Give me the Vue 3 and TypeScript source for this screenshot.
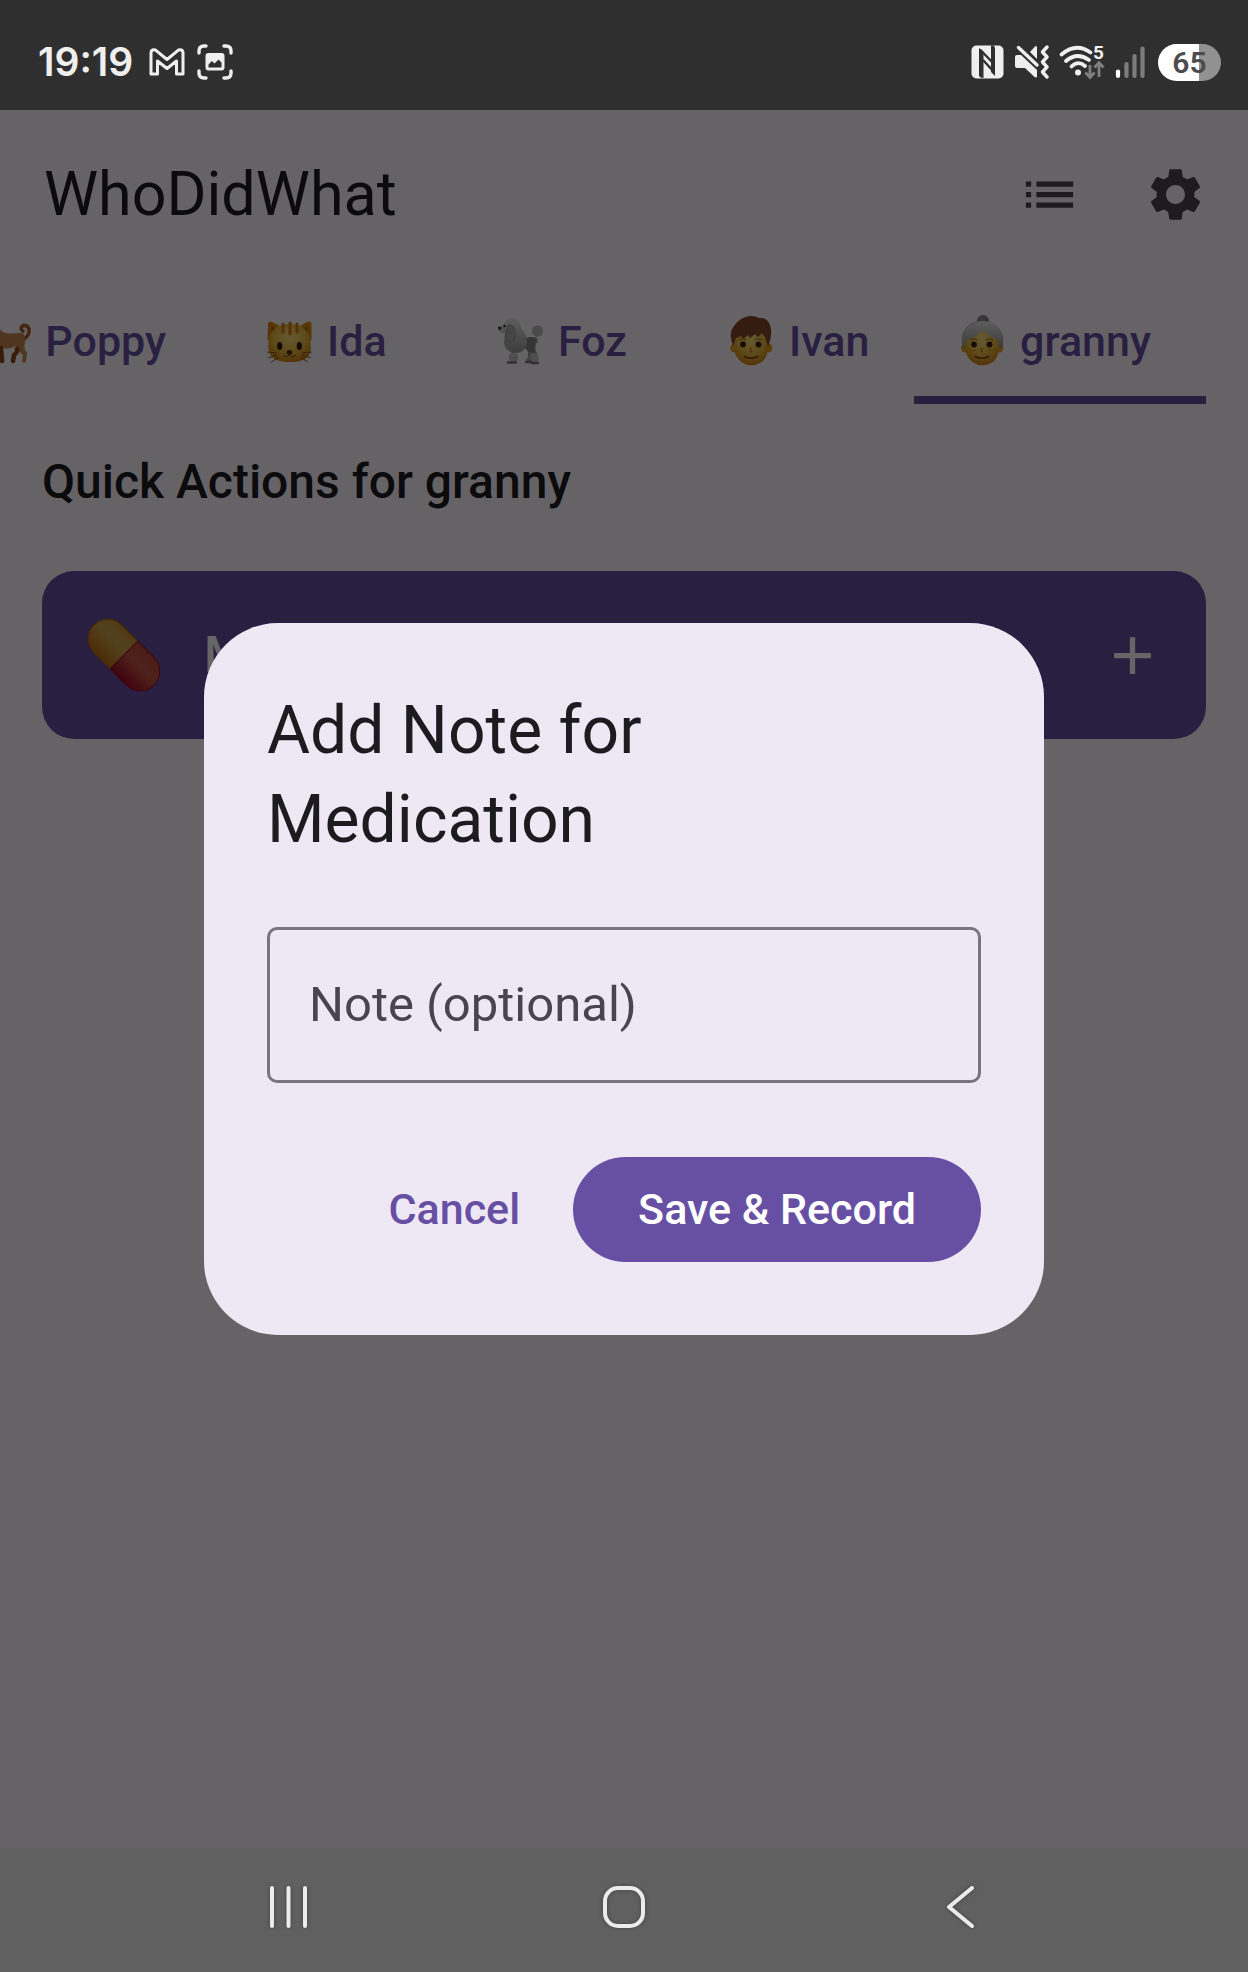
<script setup lang="ts">
import { ref } from 'vue'

interface Member {
  id: string
  name: string
}

const members: Member[] = [
  { id: 'dog', name: 'Poppy' },
  { id: 'cat', name: 'Ida' },
  { id: 'poodle', name: 'Foz' },
  { id: 'boy', name: 'Ivan' },
  { id: 'granny', name: 'granny' },
]

const selected = ref('granny')
const note = ref('')
const dialogOpen = ref(true)
</script>

<template>
  <div class="phone">
    <header class="status">
      <div class="status-side">
        <span class="clock">19:19</span>
        <svg class="mail" width="36" height="28" viewBox="0 0 36 28" aria-hidden="true">
          <path d="M2 5Q2 1.800 5 1.800Q6.500 1.800 7.500 2.800L18 11.500L28.500 2.800Q29.500 1.800 31 1.800Q34 1.800 34 5V26H27.500V13L18 20.500L8.500 13V26H2Z" fill="none" stroke="#efefef" stroke-width="3" stroke-linejoin="round" />
        </svg>
        <svg width="36" height="36" viewBox="0 0 36 36" aria-hidden="true">
          <path d="M2 9V7Q2 2 7 2H9M27 2H29Q34 2 34 7V9M34 27V29Q34 34 29 34H27M9 34H7Q2 34 2 29V27" fill="none" stroke="#efefef" stroke-width="3.400" stroke-linecap="round" />
          <path fill-rule="evenodd" fill="#efefef" d="M11.500 9H24.500Q27.500 9 27.500 12V23.500Q27.500 26.500 24.500 26.500H11.500Q8.500 26.500 8.500 23.500V12Q8.500 9 11.500 9ZM11.500 23.500H24.500V18.500L21.500 15.500L17.500 19.500L15 17L11.500 20.500Z" />
        </svg>
      </div>
      <div class="status-side right">
        <svg width="33" height="34" viewBox="0 0 33 34" aria-hidden="true">
          <rect x="0.500" y="0.500" width="32" height="33" rx="5" fill="#efefef" />
          <path d="M8 3L12.500 7V33Q9 33 8 31Z" fill="#2f2f2f" />
          <path d="M20 0.500H23Q24 2 24 4V31L20 27Z" fill="#2f2f2f" />
          <path d="M9 4.500L23 19M12 15L23 27" stroke="#2f2f2f" stroke-width="2.400" />
        </svg>
        <svg width="35" height="34" viewBox="0 0 35 34" aria-hidden="true">
          <path d="M3 10H7L23 25V32Q22 33 20 31.500L11 23H3Q1 23 1 21V12Q1 10 3 10Z" fill="#efefef" />
          <path d="M16 7L21 1.500Q23 0 23 2.500V14Z" fill="#efefef" />
          <path d="M4.500 2.500L23 20" stroke="#efefef" stroke-width="3.400" stroke-linecap="round" />
          <path d="M33 2L28.500 7L33 12L28.500 17L33 22L28.500 27L33 32" fill="none" stroke="#efefef" stroke-width="3.400" stroke-linecap="round" stroke-linejoin="round" />
        </svg>
        <svg class="wifi" width="46" height="34" viewBox="0 0 46 34" aria-hidden="true">
          <path d="M2.500 9.500Q17 -3 31.500 7.500M7 16Q18 6.500 30 15M12.500 21.500Q19 15 26 21" fill="none" stroke="#efefef" stroke-width="3.800" stroke-linecap="round" />
          <circle cx="19" cy="27.500" r="3" fill="#efefef" />
          <path d="M31 20V32M26.500 27.500L31 32.500L35.500 27.500M40 32V18M35.500 22.500L40 17.500L44.500 22.500" fill="none" stroke="#808080" stroke-width="2.800" />
          <text x="34" y="14" class="wifi-generation">5</text>
        </svg>
        <svg width="30" height="34" viewBox="0 0 30 34" aria-hidden="true">
          <g stroke-width="4.200" stroke-linecap="round">
            <path d="M3 26.500V31" stroke="#ffffff" />
            <path d="M11.500 19V31M19.500 11V31M27.500 3.500V31" stroke="#7c7c7c" />
          </g>
        </svg>
        <span class="battery">65</span>
      </div>
    </header>

    <main class="app">
      <div class="appbar">
        <h1>WhoDidWhat</h1>
        <button class="icon-button" type="button" aria-label="History">
          <svg width="63" height="63" viewBox="0 0 24 24"><path d="M3 13h2v-2H3v2zm0 4h2v-2H3v2zm0-8h2V7H3v2zm4 4h14v-2H7v2zm0 4h14v-2H7v2zM7 7v2h14V7H7z" fill="#49454f" /></svg>
        </button>
        <button class="icon-button" type="button" aria-label="Settings">
          <svg width="63" height="63" viewBox="0 0 24 24"><path fill="#49454f" d="M19.140 12.940c.04-.3.06-.61.06-.94 0-.32-.02-.64-.07-.94l2.030-1.580c.18-.14.23-.41.12-.61l-1.920-3.320c-.12-.22-.37-.29-.59-.22l-2.390.96c-.5-.38-1.030-.7-1.620-.94l-.36-2.540c-.04-.24-.24-.41-.48-.41h-3.840c-.24 0-.43.17-.47.41l-.36 2.540c-.59.24-1.130.57-1.620.94l-2.390-.96c-.22-.08-.47 0-.59.22L2.740 8.870c-.12.21-.08.47.12.61l2.030 1.580c-.05.3-.09.63-.09.94s.02.64.07.94l-2.030 1.580c-.18.14-.23.41-.12.61l1.920 3.320c.12.22.37.29.59.22l2.390-.96c.5.38 1.030.7 1.620.94l.36 2.540c.05.24.24.41.48.41h3.840c.24 0 .44-.17.47-.41l.36-2.540c.59-.24 1.130-.56 1.620-.94l2.390.96c.22.08.47 0 .59-.22l1.920-3.320c.12-.22.07-.47-.12-.61l-2.010-1.580zM12 15.600c-1.980 0-3.600-1.620-3.600-3.600s1.620-3.600 3.600-3.600 3.600 1.620 3.600 3.600-1.620 3.600-3.600 3.600z" /></svg>
        </button>
      </div>

      <div class="tabs" role="tablist">
        <button
          v-for="m in members"
          :key="m.id"
          type="button"
          role="tab"
          class="tab"
          :class="{ active: m.id === selected, long: m.name.length > 4 }"
          :aria-selected="m.id === selected"
          @click="selected = m.id"
        >
          <svg width="52" height="52" viewBox="0 0 52 52" aria-hidden="true">
            <defs>
              <radialGradient :id="'skin-' + m.id" cx="50%" cy="35%" r="65%">
                <stop offset="0" stop-color="#ffdf80" />
                <stop offset="0.600" stop-color="#e8b83c" />
                <stop offset="1" stop-color="#cf8310" />
              </radialGradient>
              <linearGradient :id="'fur-' + m.id" x1="0" y1="0" x2="0" y2="1">
                <stop offset="0" stop-color="#e8e8e8" />
                <stop offset="1" stop-color="#9a9a9a" />
              </linearGradient>
            </defs>
            <template v-if="m.id === 'dog'">
              <path d="M43 24Q49 20 48 14Q46 9 41.500 11Q38.500 14 42 16" fill="none" stroke="#a85f22" stroke-width="3.600" stroke-linecap="round" />
              <path d="M4 8Q12 4 17 10Q19 18 28 18.500L41 18Q45 20 44 28Q42 33 46 38L45 46Q44 48.500 41 47L42 40Q36 35 35 31Q25 36 20 32L8 30Q1 18 4 8Z" fill="#c98552" />
              <path d="M20 33L21 46M36 34Q37 37 33 40L32 46" fill="none" stroke="#8d4a1a" stroke-width="4.600" stroke-linecap="round" />
            </template>
            <template v-else-if="m.id === 'cat'">
              <path d="M5 8Q6 5.500 9 7L19 12H35L44 7Q47 5.500 48.500 8V25L27 40L4.500 25Z" fill="#dc8b12" />
              <path d="M8.500 11L15 15L9 22ZM45 11L38 15L44 22Z" fill="#b85c17" />
              <path d="M27 9Q40 9 45 18Q50 30 46.500 39Q43 47 27 47Q11 47 7 39Q3 30 8 18Q13 9 27 9Z" :fill="'url(#skin-' + m.id + ')'" />
              <path d="M20 9V17M27 8V19M34 9V17" stroke="#d9780f" stroke-width="3" stroke-linecap="round" />
              <ellipse cx="16.700" cy="31" rx="2.600" ry="4" fill="#2b1a10" />
              <ellipse cx="36.300" cy="31" rx="2.600" ry="4" fill="#2b1a10" />
              <ellipse cx="26.500" cy="37.500" rx="2.800" ry="2.400" fill="#5a2d12" />
              <path d="M20 40Q24 43.500 26.500 39.500Q29 43.500 33 40M14 38L4 37M14 40L5 43M15 42L8 47.500M39 38L49 37M39 40L48 43M38 42L45 47.500" fill="none" stroke="#7a4a18" stroke-width="0.900" />
            </template>
            <template v-else-if="m.id === 'poodle'">
              <path d="M41 22L43 28M39 34L42 40" stroke="#a0a0a0" stroke-width="3" />
              <circle cx="43.500" cy="16" r="5.600" fill="#b8b8b8" />
              <path d="M31 23Q41 20 42 25L41 38L36 39L31 33Z" fill="#858585" />
              <path d="M4 14Q3 11 7 11Q11 10 11 7Q15 0 22 4Q26 7 27 13Q34 21 33 29Q30 38 22 38Q11 37 10 28Q10 22 11 18Q6 19 4 14Z" :fill="'url(#fur-' + m.id + ')'" />
              <path d="M14 10Q21 9 21 18Q22 27 16 27Q11 25 12 18Z" fill="#b0b0b0" stroke="#888888" stroke-width="0.800" />
              <path d="M4 12Q6 11 8 13L6 15Q4 15 4 12Z" fill="#333333" />
              <circle cx="10.500" cy="11" r="1.200" fill="#222222" />
              <path d="M19 36L19 45M36 37L35 46" stroke="#a0a0a0" stroke-width="3.400" />
              <circle cx="19.500" cy="42.500" r="4.800" fill="#c4c4c4" />
              <circle cx="40" cy="43" r="4.800" fill="#c4c4c4" />
              <circle cx="35" cy="45" r="2.600" fill="#a5a5a5" />
              <path d="M14 47.500H22M32 47H37M38 48H44" stroke="#777777" stroke-width="2.400" stroke-linecap="round" />
            </template>
            <template v-else>
              <ellipse cx="9" cy="33" rx="3.800" ry="4.600" fill="#e8a01c" />
              <ellipse cx="43.500" cy="33" rx="3.800" ry="4.600" fill="#e8a01c" />
              <circle v-if="m.id === 'granny'" cx="27" cy="6" r="6" fill="#858585" />
              <path v-if="m.id === 'granny'" d="M7 33Q3 19 12 11Q26 0 40 11Q50 19 46 33Z" fill="#8d8d8d" />
              <path d="M26 10Q43 10 43.500 29Q43 43 36 47.500Q26 53 17 47.500Q9 42 8.500 29Q9 10 26 10Z" :fill="'url(#skin-' + m.id + ')'" />
              <path v-if="m.id === 'granny'" d="M27 15Q20 22 12 25L7 32Q3 18 14 10Q27 2 40 10Q50 18 45 32L42 25Q33 22 27 15Z" :fill="'url(#fur-' + m.id + ')'" />
              <path v-else d="M8 31Q3 18 9 11Q15 2 25 1Q31 1 34 3Q42 2 45 10Q48 19 43 32L40 22L37 18L33 22L30 19L25 23L23 20L18 24L16 21L11 23Z" fill="#83482c" />
              <circle cx="18" cy="29.500" r="2.900" fill="#3a2010" />
              <circle cx="33.500" cy="29.500" r="2.900" fill="#3a2010" />
              <path d="M14 25Q18 23 21 25M30 25Q34 23 37 25M26 33Q24.500 36.500 27 37" fill="none" stroke="#ad6b12" stroke-width="1.200" />
              <path d="M19.500 41.500Q26 45 32.500 41.500" fill="none" stroke="#7a3f16" stroke-width="1.700" stroke-linecap="round" />
              <path v-if="m.id === 'granny'" d="M13 34Q16 37 20 35M32 35Q36 37 39 34" fill="none" stroke="#d2921d" stroke-width="1" />
            </template>
          </svg>
          <span>{{ m.name }}</span>
        </button>
      </div>

      <section class="actions">
        <h2>Quick Actions for {{ selected }}</h2>
        <button class="action" type="button" @click="dialogOpen = true">
          <svg width="80" height="80" viewBox="0 0 80 80" aria-hidden="true">
            <defs>
              <linearGradient id="pill-top" x1="0" y1="0" x2="0" y2="1">
                <stop offset="0" stop-color="#c99030" />
                <stop offset="0.400" stop-color="#cfa650" />
                <stop offset="1" stop-color="#c06c10" />
              </linearGradient>
              <linearGradient id="pill-bottom" x1="0" y1="0" x2="0" y2="1">
                <stop offset="0" stop-color="#b84c38" />
                <stop offset="0.450" stop-color="#c45448" />
                <stop offset="1" stop-color="#a00a26" />
              </linearGradient>
            </defs>
            <g transform="rotate(45 40 40)">
              <path d="M40 20.500H17A19.500 19.500 0 0 0 17 59.500H40Z" fill="url(#pill-top)" stroke="#a8640c" stroke-width="1" />
              <path d="M40 20.500H63A19.500 19.500 0 0 1 63 59.500H40Z" fill="url(#pill-bottom)" stroke="#9c0c20" stroke-width="1" />
            </g>
          </svg>
          <span class="action-name">Medication</span>
          <svg width="63" height="63" viewBox="0 0 24 24" aria-hidden="true"><path d="M19 13h-6v6h-2v-6H5v-2h6V5h2v6h6v2z" fill="#ffffff" /></svg>
        </button>
      </section>

      <div v-if="dialogOpen" class="scrim">
        <form class="dialog" role="dialog" aria-modal="true" aria-labelledby="dialog-title" @submit.prevent="dialogOpen = false">
          <h2 id="dialog-title">Add Note for<br />Medication</h2>
          <input v-model="note" type="text" placeholder="Note (optional)" aria-label="Note (optional)" />
          <div class="dialog-buttons">
            <button class="cancel" type="button" @click="dialogOpen = false">Cancel</button>
            <button class="save" type="submit">Save &amp; Record</button>
          </div>
        </form>
      </div>
    </main>

    <nav class="navbar" aria-label="System navigation">
      <button type="button" aria-label="Recent apps">
        <svg width="48" height="48" viewBox="0 0 48 48"><path d="M8 5V43M24.500 5V43M41 5V43" /></svg>
      </button>
      <button type="button" aria-label="Home">
        <svg width="48" height="48" viewBox="0 0 48 48"><rect x="5" y="5" width="38" height="38" rx="13" /></svg>
      </button>
      <button type="button" aria-label="Back">
        <svg width="48" height="48" viewBox="0 0 48 48"><path d="M36 5L13 24L36 43" /></svg>
      </button>
    </nav>
  </div>
</template>

<style>
body {
  margin: 0;
}
</style>

<style scoped>
.phone {
  display: flex;
  flex-direction: column;
  min-height: 100vh;
  overflow: hidden;
  font-family: Roboto, "Liberation Sans", sans-serif;
  color: #1c1b1f;
}
button {
  border: 0;
  padding: 0;
  background: none;
  font: inherit;
  color: inherit;
}
svg {
  display: block;
  flex: none;
}
h1,
h2 {
  margin: 0;
}

.status {
  display: flex;
  justify-content: space-between;
  box-sizing: border-box;
  height: 110px;
  padding: 14px 27px 0 38px;
  background: #2f2f2f;
}
.status-side {
  display: flex;
  align-items: center;
  gap: 12px;
}
.right {
  gap: 10px;
}
.clock {
  font: 600 39px/48px Inter, sans-serif;
  color: #efefef;
}
.mail {
  margin-left: 4px;
}
.wifi {
  overflow: visible;
}
.wifi-generation {
  font: 700 19px Roboto, sans-serif;
  fill: #efefef;
}
.battery {
  width: 63px;
  margin-left: 3px;
  border-radius: 19px;
  background: linear-gradient(90deg, #ffffff 41px, #919191 41px);
  font: 600 30px/37px Roboto, sans-serif;
  text-align: center;
  color: #4c4c50;
}

.app {
  position: relative;
  flex: 1;
  background: #fef7ff;
}
.appbar {
  display: flex;
  align-items: center;
  height: 168px;
  padding: 0 10px 0 44px;
}
h1 {
  flex: 1;
  font-size: 61px;
  line-height: 72px;
  font-weight: 400;
}
.icon-button {
  display: grid;
  place-items: center;
  width: 126px;
  height: 126px;
}
.tabs {
  display: flex;
  justify-content: flex-end;
  height: 126px;
  padding-right: 42px;
  overflow: hidden;
}
.tab {
  display: flex;
  flex: none;
  align-items: center;
  gap: 12px;
  box-sizing: border-box;
  min-width: 231px;
  padding: 0 42px;
  border-top: 8px solid transparent;
  border-bottom: 8px solid transparent;
  font-size: 43px;
  line-height: 52px;
  font-weight: 500;
  color: #6750a4;
}
.tab.long {
  padding-right: 55px;
}
.tab.active {
  border-bottom-color: #6750a4;
}
.actions {
  padding: 46px 42px;
}
.actions h2 {
  margin-bottom: 58px;
  font-size: 48px;
  line-height: 63px;
  font-weight: 500;
}
.action {
  display: flex;
  align-items: center;
  gap: 40px;
  width: 100%;
  height: 168px;
  padding: 0 42px;
  border-radius: 32px;
  background: #6750a4;
  color: #ffffff;
}
.action-name {
  flex: 1;
  font-size: 50px;
  line-height: 63px;
  font-weight: 500;
  text-align: left;
}

.scrim {
  position: absolute;
  inset: 0;
  display: grid;
  place-items: center;
  background: rgba(0, 0, 0, 0.6);
}
.dialog {
  box-sizing: border-box;
  width: 840px;
  max-width: 90%;
  padding: 63px 63px 73px;
  border-radius: 74px;
  background: #eee8f4;
}
.dialog h2 {
  margin-bottom: 63px;
  font-size: 66px;
  line-height: 89px;
  font-weight: 400;
}
.dialog input {
  display: block;
  box-sizing: border-box;
  width: 100%;
  height: 156px;
  padding: 0 39px;
  border: 3px solid #79747e;
  border-radius: 10px;
  outline: 0;
  background: transparent;
  font: 400 49px Roboto, sans-serif;
  color: #1c1b1f;
}
.dialog input::placeholder {
  color: #49454f;
  opacity: 1;
}
.dialog-buttons {
  display: flex;
  justify-content: flex-end;
  gap: 21px;
  margin-top: 74px;
  font-size: 43px;
  line-height: 52px;
  font-weight: 500;
}
.cancel {
  height: 105px;
  padding: 0 32px;
  color: #6750a4;
}
.save {
  height: 105px;
  padding: 0 65px;
  border-radius: 53px;
  background: #6750a4;
  color: #ffffff;
}

.navbar {
  display: grid;
  grid-template-columns: repeat(3, 1fr);
  box-sizing: border-box;
  height: 125px;
  padding: 0 120px 6px;
  background: #606060;
}
.navbar button {
  display: grid;
  place-items: center;
}
.navbar svg {
  fill: none;
  stroke: #ebebeb;
  stroke-width: 4;
  stroke-linecap: round;
  stroke-linejoin: round;
  filter: drop-shadow(0 0 2px rgba(0, 0, 0, 0.3));
}
</style>
